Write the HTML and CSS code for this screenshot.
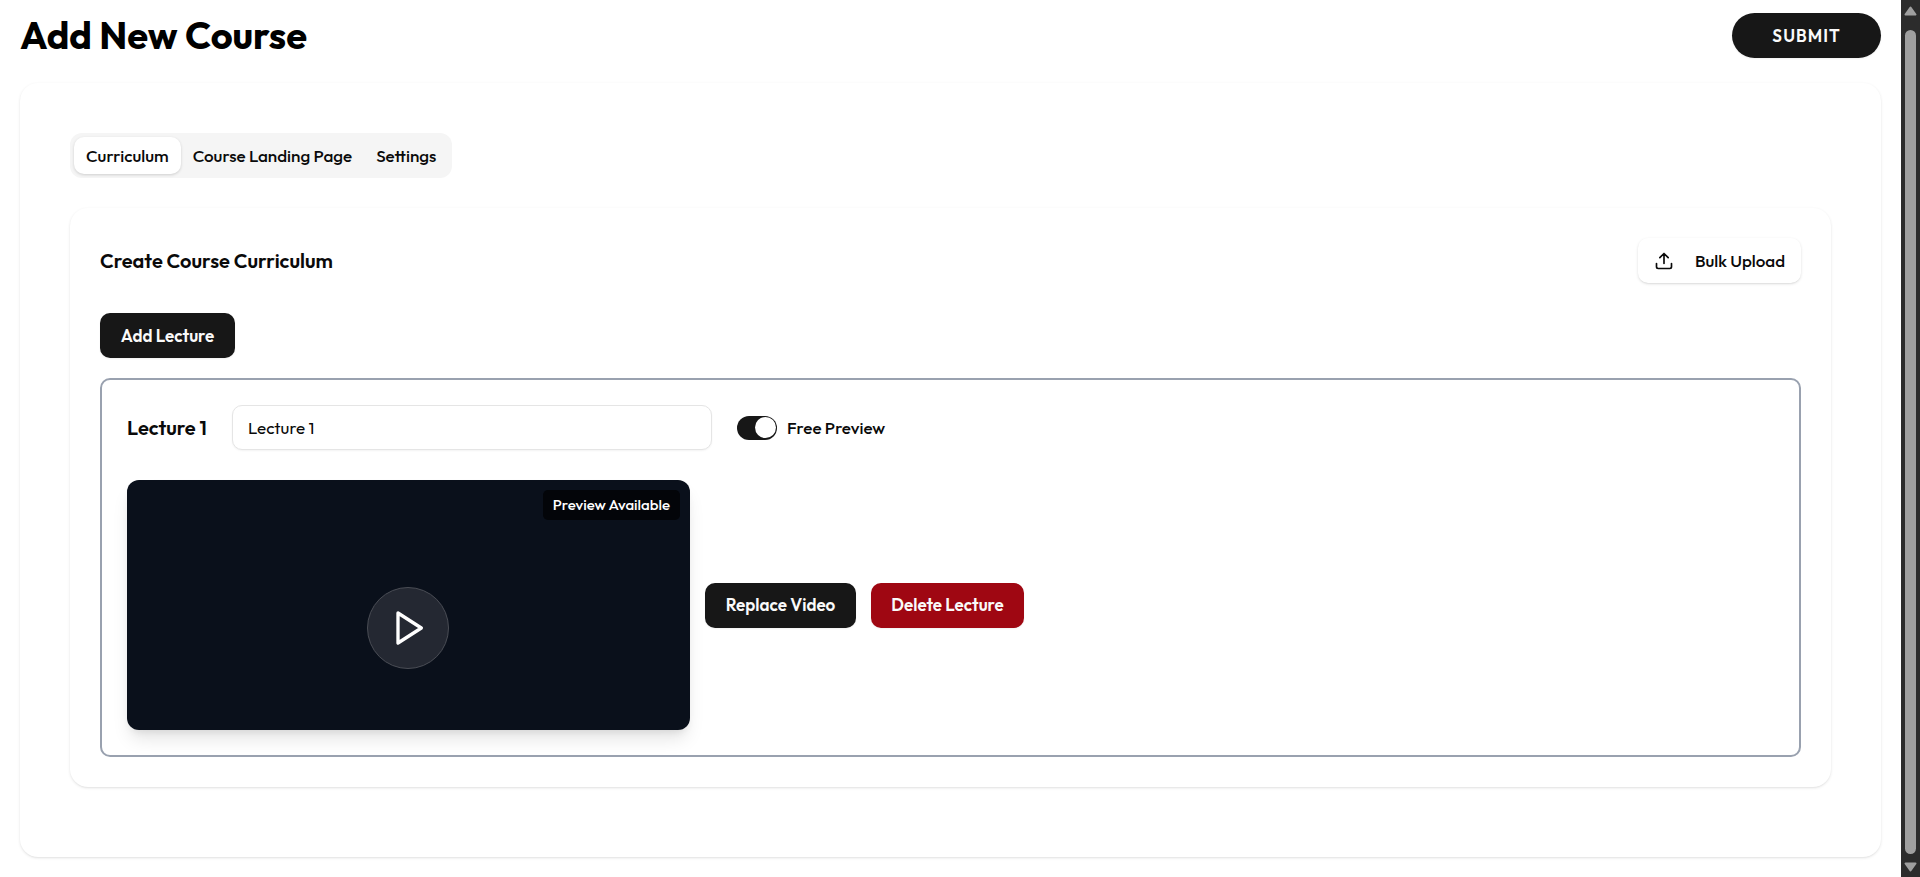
FILE: index.html
```html
<!DOCTYPE html>
<html lang="en">
<head>
<meta charset="utf-8">
<meta name="viewport" content="width=device-width, initial-scale=1">
<title>Add New Course</title>
<link rel="stylesheet" href="styles.css">
</head>
<body>
<div class="shell">
  <main class="page">
    <header class="page-header">
      <h1 class="page-title">Add New Course</h1>
      <button class="btn btn-submit" type="submit">SUBMIT</button>
    </header>
    <section class="card card-outer">
      <div class="tabs" role="tablist">
        <button class="tab tab-active" type="button" role="tab" aria-selected="true">Curriculum</button>
        <button class="tab" type="button" role="tab" aria-selected="false">Course Landing Page</button>
        <button class="tab" type="button" role="tab" aria-selected="false">Settings</button>
      </div>
      <section class="card card-inner">
        <div class="card-header">
          <h2 class="card-title">Create Course Curriculum</h2>
          <button class="btn btn-outline" type="button">
            <svg class="upload-icon" viewBox="0 0 24 24" aria-hidden="true"><path d="M12 3v12M17 8l-5-5-5 5M21 15v4a2 2 0 0 1-2 2H5a2 2 0 0 1-2-2v-4"/></svg>
            Bulk Upload
          </button>
        </div>
        <button class="btn btn-add" type="button">Add Lecture</button>
        <article class="lecture">
          <div class="lecture-row">
            <label class="lecture-label" for="lecture-title">Lecture 1</label>
            <input class="lecture-input" id="lecture-title" type="text" value="Lecture 1">
            <div class="preview">
              <input class="switch" id="free-preview" type="checkbox" role="switch" checked>
              <label class="preview-label" for="free-preview">Free Preview</label>
            </div>
          </div>
          <div class="media-row">
            <div class="video">
              <span class="badge">Preview Available</span>
              <button class="play" type="button" aria-label="Play video">
                <svg class="play-icon" viewBox="0 0 24 24" aria-hidden="true"><path d="M6 3l14 9-14 9z"/></svg>
              </button>
            </div>
            <button class="btn btn-replace" type="button">Replace Video</button>
            <button class="btn btn-delete" type="button">Delete Lecture</button>
          </div>
        </article>
      </section>
    </section>
  </main>
  <div class="scrollbar" aria-hidden="true">
    <svg class="arrow" viewBox="0 0 13 10"><path d="M6.500 1.500L11.500 8.500H1.500z"/></svg>
    <div class="thumb"></div>
    <svg class="arrow" viewBox="0 0 13 10"><path d="M1.500 1.500H11.500L6.500 8.500z"/></svg>
  </div>
</div>
</body>
</html>
```
FILE: styles.css
```css
* { box-sizing: border-box; }

body {
  margin: 0;
  background: #fff;
  color: #0a0a0a;
  font-family: Outfit, Lato, sans-serif;
  font-size: 17px;
  line-height: 24px;
}

button, input { font: inherit; color: inherit; }

.shell { display: flex; min-height: 100vh; }

.page { flex: 1; min-width: 0; padding: 13px 20px 20px; }

.page-header {
  display: flex;
  align-items: center;
  justify-content: space-between;
  margin-bottom: 25px;
}

.page-title { margin: 0; color: #000; font-size: 38px; line-height: 45px; font-weight: 700; }

.btn {
  display: inline-flex;
  align-items: center;
  justify-content: center;
  height: 45px;
  padding: 0;
  border: 0;
  border-radius: 10px;
  background: #171717;
  color: #fafafa;
  font-weight: 600;
  white-space: nowrap;
  box-shadow: 0 1px 2px rgba(0, 0, 0, 0.06);
}

.btn-submit { min-width: 149px; border-radius: 23px; letter-spacing: 1px; }
.btn-add { min-width: 135px; }
.btn-replace { min-width: 151px; }
.btn-delete { min-width: 153px; background: #9f0712; }

.btn-outline {
  min-width: 163px;
  gap: 21px;
  background: #fff;
  color: #0a0a0a;
  font-weight: 500;
  box-shadow: 0 1px 3px rgba(0, 0, 0, 0.12), 0 1px 2px -1px rgba(0, 0, 0, 0.12);
}

.upload-icon {
  width: 20px;
  height: 20px;
  fill: none;
  stroke: currentColor;
  stroke-width: 2;
  stroke-linecap: round;
  stroke-linejoin: round;
}

.card {
  border-radius: 18px;
  background: #fff;
  box-shadow: 0 1px 3px rgba(0, 0, 0, 0.1), 0 1px 2px -1px rgba(0, 0, 0, 0.1);
}

.card-outer { padding: 50px 50px 70px; }
.card-inner { padding: 30px; }

.tabs {
  display: inline-flex;
  height: 45px;
  margin-bottom: 30px;
  padding: 4px;
  border-radius: 12px;
  background: #f5f5f5;
  vertical-align: top;
}

.tab {
  padding: 0 12px;
  border: 0;
  border-radius: 10px;
  background: transparent;
  font-weight: 500;
}

.tab-active { background: #fff; box-shadow: 0 1px 3px rgba(0, 0, 0, 0.16); }

.card-header {
  display: flex;
  align-items: center;
  justify-content: space-between;
  margin-bottom: 30px;
}

.card-title { margin: 0; font-size: 20px; font-weight: 600; }

.lecture {
  margin-top: 20px;
  padding: 25px;
  border: 2px solid #99a1af;
  border-radius: 10px;
}

.lecture-row { display: flex; align-items: center; gap: 25px; margin-bottom: 30px; }

.lecture-label { min-width: 80px; font-size: 20px; font-weight: 600; }

.lecture-input {
  width: 480px;
  height: 45px;
  padding: 0 15px;
  border: 1px solid #e5e5e5;
  border-radius: 10px;
  background: #fff;
  box-shadow: 0 1px 2px rgba(0, 0, 0, 0.05);
}

.preview { display: flex; align-items: center; gap: 10px; }
.preview-label { font-weight: 500; }

.switch {
  display: flex;
  align-items: center;
  justify-content: flex-end;
  width: 40px;
  height: 24px;
  margin: 0;
  padding: 1px;
  border-radius: 12px;
  background: #171717;
  appearance: none;
}

.switch::before { content: ""; width: 21px; height: 21px; border-radius: 50%; background: #fff; }
.switch:not(:checked) { justify-content: flex-start; background: #d4d4d4; }

.media-row { display: flex; align-items: center; gap: 15px; }

.video {
  position: relative;
  display: flex;
  align-items: center;
  justify-content: center;
  width: 563px;
  height: 250px;
  padding: 46px 1px 0 0;
  border-radius: 12px;
  background: #0a101b;
  box-shadow: 0 12px 18px -3px rgba(0, 0, 0, 0.1), 0 5px 8px -4px rgba(0, 0, 0, 0.1);
}

.badge {
  position: absolute;
  top: 10px;
  right: 10px;
  padding: 3px 10px;
  border-radius: 5px;
  background: #030509;
  color: #fff;
  font-size: 15px;
  font-weight: 500;
}

.play {
  display: flex;
  align-items: center;
  justify-content: center;
  width: 82px;
  height: 82px;
  padding: 0;
  border: 1px solid #4a4d55;
  border-radius: 50%;
  background: #242832;
}

.play-icon {
  width: 40px;
  height: 40px;
  fill: none;
  stroke: #fff;
  stroke-width: 2;
  stroke-linecap: round;
  stroke-linejoin: round;
}

.scrollbar {
  display: flex;
  flex-direction: column;
  align-items: center;
  width: 19px;
  padding: 6px 0 5px;
  background: #2c2c2c;
}

.arrow {
  width: 13px;
  height: 10px;
  fill: #9f9f9f;
  stroke: #9f9f9f;
  stroke-width: 2;
  stroke-linejoin: round;
}

.thumb { flex: 1; width: 11px; margin: 14px 0 8px; border-radius: 6px; background: #9f9f9f; }
```
